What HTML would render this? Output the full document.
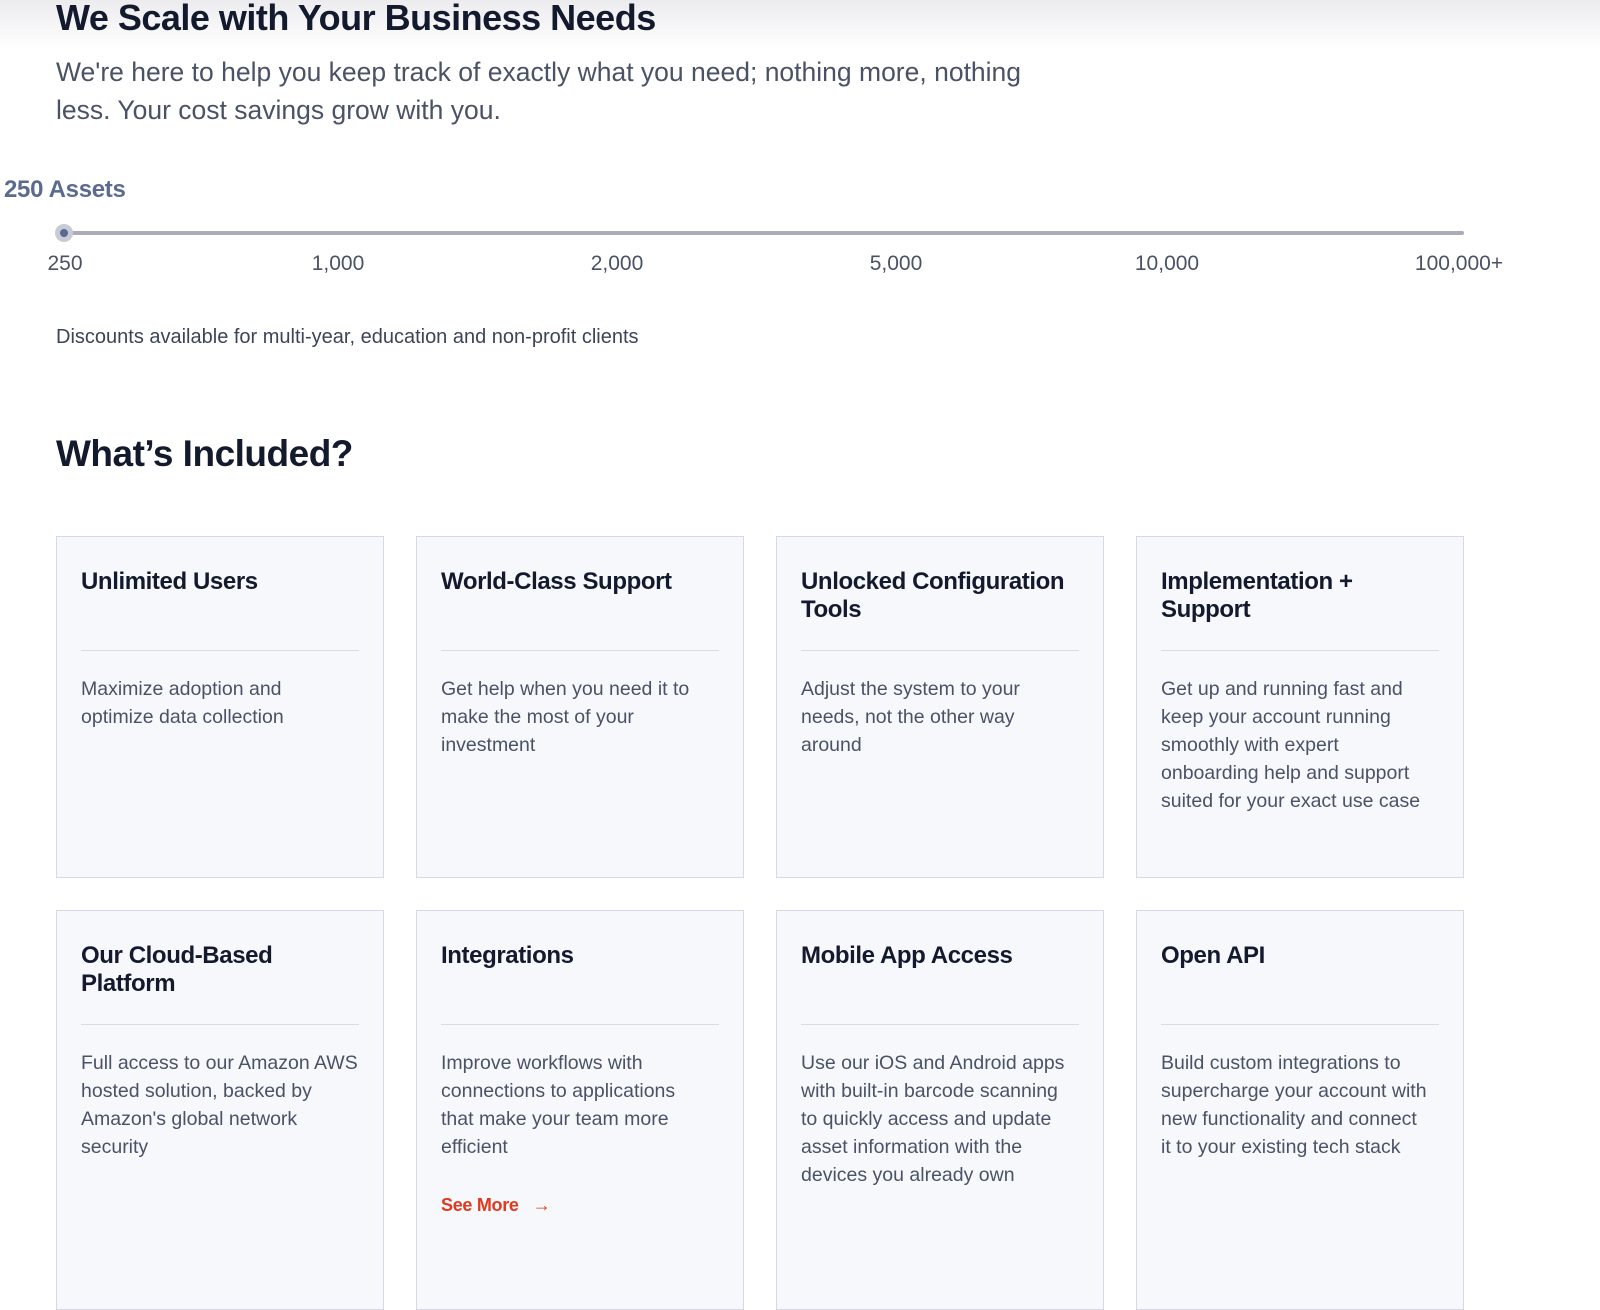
<!DOCTYPE html>
<html><head><meta charset="utf-8"><style>
*{margin:0;padding:0;box-sizing:border-box}
body{width:1600px;height:1269px;overflow:hidden;background:#fff;font-family:"Liberation Sans",sans-serif;position:relative;color:#1b2236}
.topfade{position:absolute;left:0;top:0;width:1600px;height:50px;background:linear-gradient(#ececef,#fff)}
.a{position:absolute;white-space:nowrap}
h1{position:absolute;left:56px;top:-3px;font-size:36px;font-weight:700;color:#141a2e;letter-spacing:-0.5px;white-space:nowrap}
.sub{position:absolute;left:56px;top:53px;font-size:26.5px;line-height:38px;color:#4a5266;white-space:nowrap}
.assets{left:4px;top:176px;font-size:24px;font-weight:700;color:#5a6a90;letter-spacing:-0.3px}
.track{position:absolute;left:64px;top:231px;width:1400px;height:4px;background:#a9adb9;border-radius:2px}
.knob{position:absolute;left:55px;top:224px;width:18px;height:18px;border-radius:50%;background:#c7cbd6}
.knob:after{content:"";position:absolute;left:5px;top:5px;width:8px;height:8px;border-radius:50%;background:#586994}
.tick{top:252px;font-size:21px;color:#4a5266;transform:translateX(-50%)}
.disc{left:56px;top:326px;font-size:20px;color:#3c4458}
h2{position:absolute;left:56px;top:433px;font-size:37px;font-weight:700;color:#141a2e;letter-spacing:-0.5px}
.card{position:absolute;width:328px;background:#f7f8fc;border:1.5px solid #d5d9e6}
.card h3{position:absolute;left:24px;top:31px;width:300px;font-size:24px;line-height:28px;font-weight:700;color:#141a2e;letter-spacing:-0.4px;white-space:nowrap}
.card hr{position:absolute;left:24px;top:113px;width:278px;border:0;border-top:1.5px solid #d9dce6}
.card p{position:absolute;left:24px;top:138px;font-size:19.5px;line-height:28px;color:#4a5266;white-space:nowrap}
.see{position:absolute;left:24px;top:284px;font-size:18px;font-weight:700;color:#e0391f;letter-spacing:-0.3px}
</style></head><body>
<div class="topfade"></div>
<h1>We Scale with Your Business Needs</h1>
<div class="sub">We're here to help you keep track of exactly what you need; nothing more, nothing<br>less. Your cost savings grow with you.</div>
<div class="a assets">250 Assets</div>
<div class="track"></div><div class="knob"></div>
<div class="a tick" style="left:65px">250</div>
<div class="a tick" style="left:338px">1,000</div>
<div class="a tick" style="left:617px">2,000</div>
<div class="a tick" style="left:896px">5,000</div>
<div class="a tick" style="left:1167px">10,000</div>
<div class="a tick" style="left:1459px">100,000+</div>
<div class="a disc">Discounts available for multi-year, education and non-profit clients</div>
<h2>What’s Included?</h2>

<div class="card" style="left:56px;top:536px;height:342px"><h3>Unlimited Users</h3><hr><p>Maximize adoption and<br>optimize data collection</p></div>
<div class="card" style="left:416px;top:536px;height:342px"><h3>World-Class Support</h3><hr><p>Get help when you need it to<br>make the most of your<br>investment</p></div>
<div class="card" style="left:776px;top:536px;height:342px"><h3>Unlocked Configuration<br>Tools</h3><hr><p>Adjust the system to your<br>needs, not the other way<br>around</p></div>
<div class="card" style="left:1136px;top:536px;height:342px"><h3>Implementation +<br>Support</h3><hr><p>Get up and running fast and<br>keep your account running<br>smoothly with expert<br>onboarding help and support<br>suited for your exact use case</p></div>

<div class="card" style="left:56px;top:910px;height:400px"><h3>Our Cloud-Based<br>Platform</h3><hr><p>Full access to our Amazon AWS<br>hosted solution, backed by<br>Amazon's global network<br>security</p></div>
<div class="card" style="left:416px;top:910px;height:400px"><h3>Integrations</h3><hr><p>Improve workflows with<br>connections to applications<br>that make your team more<br>efficient</p><div class="see">See More &nbsp;&nbsp;→</div></div>
<div class="card" style="left:776px;top:910px;height:400px"><h3>Mobile App Access</h3><hr><p>Use our iOS and Android apps<br>with built-in barcode scanning<br>to quickly access and update<br>asset information with the<br>devices you already own</p></div>
<div class="card" style="left:1136px;top:910px;height:400px"><h3>Open API</h3><hr><p>Build custom integrations to<br>supercharge your account with<br>new functionality and connect<br>it to your existing tech stack</p></div>
</body></html>
